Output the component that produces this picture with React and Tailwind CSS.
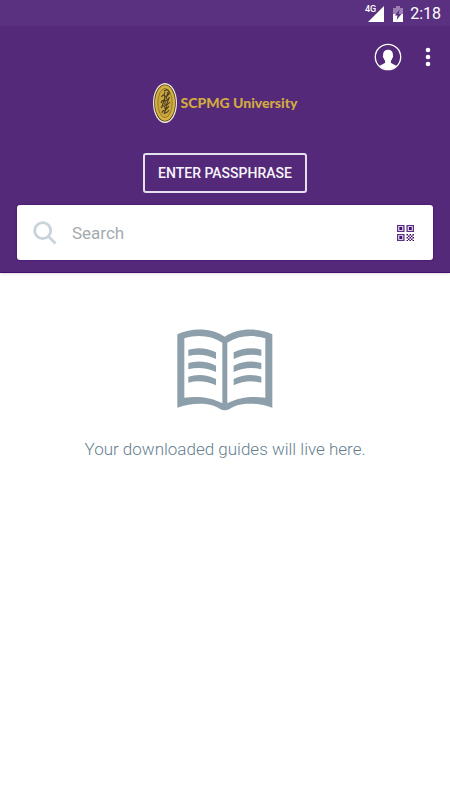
function StatusBar() {
  return (
    <div className="flex h-[26px] items-end justify-end bg-[#5a3080] pr-[9px] pb-1 text-white">
      <span className="self-start pt-1 text-[9px] leading-[10px] font-medium">4G</span>
      <svg className="-ml-2 h-4 w-4" viewBox="0 0 16 16" fill="currentColor">
        <path d="M16 0v16H0z" />
      </svg>
      <svg className="ml-2 h-4 w-3" viewBox="0 0 12 16">
        <path d="M4 0h4v2h3v6H1V2h3z" fill="#9b80b3" />
        <path d="M1 8h10v8H1z" fill="#fff" />
        <path d="M7.5 3.5L2.8 9.6h2.7L4.6 14l4.8-6H6.7z" fill="#5a3080" />
      </svg>
      <span className="ml-1.5 text-base leading-4">2:18</span>
    </div>
  );
}

function Logo() {
  return (
    <div className="flex items-center justify-center gap-1">
      <svg className="h-10 w-6" viewBox="0 0 24 40">
        <ellipse cx="12" cy="20" rx="12" ry="20" fill="#f4eedb" />
        <ellipse cx="12" cy="20" rx="10.8" ry="18.6" fill="#4b3920" />
        <ellipse cx="12" cy="20" rx="10" ry="17.8" fill="#d5b03f" />
        <ellipse cx="12" cy="20" rx="7.2" ry="14.6" fill="#c9a63e" stroke="#94792f" />
        <path
          d="M11 8c4-3 7 1 4 4s-5 0-3-3M8.5 14c2-4 4-1 3 2s3 2 5-2M8 20c1-4 5-3 4 0s2 3 5-1M8 25c1-3 4-3 4 0s2 1 4-2M9 30c0-3 3-3 3-1s2 1 4-2M15 9l-2 7M16 15l-3 8M11 17l-2 7M14 23l-3 8"
          fill="none"
          stroke="#4d3d20"
          strokeWidth="1.1"
        />
      </svg>
      <span className="font-[Lato,sans-serif] text-sm leading-5 font-black text-[#d2aa42]">SCPMG University</span>
    </div>
  );
}

function ProfileIcon() {
  return (
    <svg className="h-7 w-7" viewBox="0 0 28 28">
      <circle cx="14" cy="14" r="12.7" fill="none" stroke="#fff" strokeWidth="1.3" />
      <path
        d="M14 6.8c-3.2 0-5 2-4.9 5 0 .8-.4 1-.2 2 .2.9.7 1 .9 1.6.3 1.2.7 1.7 1.3 2.3v2c-1.2 1.3-3.6 1.5-5.6 3.3C7.8 25.2 10.6 26.3 14 26.3s6.2-1.1 8.5-3.3c-2-1.8-4.4-2-5.6-3.3v-2c.6-.6 1-1.1 1.3-2.3.2-.6.7-.7.9-1.6.2-1-.2-1.2-.2-2 .1-3-1.7-5-4.9-5z"
        fill="#fff"
      />
    </svg>
  );
}

function QrIcon() {
  return (
    <svg className="h-4 w-[17px]" viewBox="0 0 17 16">
      <g fill="none" stroke="#5c3185" strokeWidth="1.3">
        <path d="M.6.6h6.3v5.8H.6zM10.1.6h6.3v5.8h-6.3zM.6 9.6h6.3v5.8H.6z" />
      </g>
      <g fill="#431070">
        <path d="M2.3 2h3v3h-3zM11.8 2h3v3h-3zM2.3 11h3v3h-3z" />
        <path d="M9.5 9H11v1.5H9.5zM12.5 9H14v1.5h-1.5zM15.5 9H17v1.5h-1.5zM11 10.5h1.5V12H11zM14 10.5h1.5V12H14zM9.5 12H11v1.5H9.5zM12.5 12H14v1.5h-1.5zM15.5 12H17v1.5h-1.5zM11 13.5h1.5V15H11zM14 13.5h1.5V15H14zM9.5 15H11v1H9.5zM12.5 15H14v1h-1.5zM15.5 15H17v1h-1.5z" />
      </g>
    </svg>
  );
}

function BookIcon() {
  return (
    <svg className="h-[82px] w-24" viewBox="38 27 288 246" fill="#8d9faa">
      <path
        fillRule="evenodd"
        d="M39 43C82 23 142 23 181 50C221 23 281 23 324 43V263C278 246 222 247 196 267Q181 275 167 267C141 247 85 246 39 263zM60 55V233C100 228 140 232 174 250V68C140 46 99 43 60 55zM189 68V250C223 232 263 228 303 233V55C264 43 223 46 189 68z"
      />
      <path d="M72 89Q114 77 155 97V117Q114 97 72 108zM72 129Q114 117 155 137V156Q114 137 72 148zM72 170Q114 157 155 177V196Q114 177 72 188z" />
      <path d="M291 89Q249 77 208 97V117Q249 97 291 108zM291 129Q249 117 208 137V156Q249 137 291 148zM291 170Q249 157 208 177V196Q249 177 291 188z" />
    </svg>
  );
}

export default function App() {
  return (
    <div className="min-h-screen bg-white font-[Roboto,sans-serif]">
      <header className="border-b border-[#43106b] bg-[#54297a] shadow-sm">
        <StatusBar />
        <div className="flex items-center justify-end gap-4 pt-[17px] pr-3">
          <button type="button" aria-label="Profile">
            <ProfileIcon />
          </button>
          <button type="button" aria-label="More options" className="flex h-7 w-5 items-center justify-center">
            <svg className="h-5 w-1.5" viewBox="0 0 6 20" fill="#fff">
              <circle cx="3" cy="3" r="2.3" />
              <circle cx="3" cy="10" r="2.3" />
              <circle cx="3" cy="17" r="2.3" />
            </svg>
          </button>
        </div>
        <div className="pt-3">
          <Logo />
        </div>
        <div className="flex justify-center pt-[30px]">
          <button
            type="button"
            className="h-10 rounded-[3px] border-2 border-[#e6dfec] px-[13px] text-sm leading-5 font-medium text-[#f8f5fb]"
          >
            ENTER PASSPHRASE
          </button>
        </div>
        <div className="px-[17px] py-3">
          <div className="flex h-[55px] items-center rounded-[3px] bg-white pr-[19px] pl-4 shadow-[0_0_2px_#3d0768]">
            <svg className="h-6 w-6" viewBox="0 0 24 24" fill="none" stroke="#c8d3da" strokeWidth="2.8">
              <circle cx="9.7" cy="9.7" r="8" />
              <path d="M15.5 15.5l7 7" />
            </svg>
            <input
              type="text"
              aria-label="Search"
              placeholder="Search"
              className="ml-[15px] min-w-0 flex-1 text-[17px] leading-6 text-[#54297a] outline-none placeholder:text-[#a3abaf]"
            />
            <button type="button" aria-label="Scan QR code">
              <QrIcon />
            </button>
          </div>
        </div>
      </header>
      <main className="flex flex-col items-center pt-14">
        <BookIcon />
        <p className="pt-[26px] text-[17px] leading-6 font-light text-[#667f91]">Your downloaded guides will live here.</p>
      </main>
    </div>
  );
}
